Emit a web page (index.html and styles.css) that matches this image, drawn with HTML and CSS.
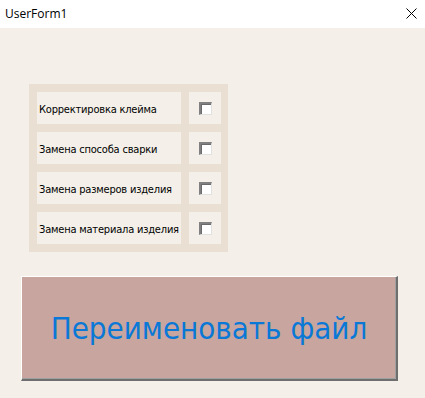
FILE: index.html
```html
<!DOCTYPE html>
<html lang="ru">

<head>
  <meta charset="UTF-8" />
  <title>UserForm1</title>
  <link rel="stylesheet" href="styles.css">
</head>

<body>
  <div class="titlebar">
    <span class="title">UserForm1</span>
    <svg class="close" width="11" height="11" viewBox="0 0 11 11">
      <path d="M0.5 0.5 L10.5 10.5 M10.5 0.5 L0.5 10.5" stroke="#000" stroke-width="1" fill="none" />
    </svg>
  </div>

  <div class="form">
    <div class="options">
      <div class="label">Корректировка клейма</div>
      <div class="check"><span class="box"></span></div>
      <div class="label">Замена способа сварки</div>
      <div class="check"><span class="box"></span></div>
      <div class="label">Замена размеров изделия</div>
      <div class="check"><span class="box"></span></div>
      <div class="label">Замена материала изделия</div>
      <div class="check"><span class="box"></span></div>
    </div>

    <button class="rename">Переименовать файл</button>
  </div>
</body>

</html>
```

FILE: styles.css
```css
body {
  margin: 0;
  width: 425px;
  height: 398px;
  background-color: #f4f0e9;
  font-family: "DejaVu Sans", sans-serif;
  overflow: hidden;
}

.titlebar {
  height: 28px;
  background-color: #fff;
  display: flex;
  align-items: center;
  justify-content: space-between;
  padding: 0 8px 0 5px;
}

.title {
  font-family: "Open Sans", "Liberation Sans", sans-serif;
  font-size: 12px;
  color: #000;
  margin-top: -2px;
}

.close {
  margin-top: -2px;
}

.form {
  padding: 56px 0 0 21px;
}

.options {
  margin-left: 8px;
  width: 184px;
  padding: 8px 7px 8px 8px;
  background-color: #e9dfd3;
  display: grid;
  grid-template-columns: 144px 32px;
  grid-auto-rows: 32px;
  gap: 8px;
}

.label {
  background-color: #f4f0e9;
  font-family: "DejaVu Sans Condensed", "DejaVu Sans", sans-serif;
  font-size: 11px;
  color: #000;
  display: flex;
  align-items: center;
  padding-left: 2px;
  padding-top: 3px;
  box-sizing: border-box;
  white-space: nowrap;
  letter-spacing: -0.2px;
}

.check {
  background-color: #f4f0e9;
  display: flex;
  align-items: center;
  justify-content: center;
}

.box {
  width: 13px;
  height: 13px;
  box-sizing: border-box;
  background-color: #fff;
  border-top: 2px solid #808080;
  border-left: 2px solid #808080;
  border-right: 1px solid #e0e0e0;
  border-bottom: 1px solid #e0e0e0;
  box-shadow: inset 1px 1px 0 #6a6a6a;
}

.rename {
  margin-top: 24px;
  width: 377px;
  height: 105px;
  background-color: #c8a59e;
  border-top: 1px solid #fff;
  border-left: 1px solid #fff;
  border-right: 2px solid #6e6e6e;
  border-bottom: 2px solid #6e6e6e;
  box-shadow: inset -1px -1px 0 #a0a0a0;
  color: #0a78d6;
  font-family: "DejaVu Sans Condensed", "DejaVu Sans", sans-serif;
  font-size: 31px;
  padding: 0;
  cursor: pointer;
}
```
